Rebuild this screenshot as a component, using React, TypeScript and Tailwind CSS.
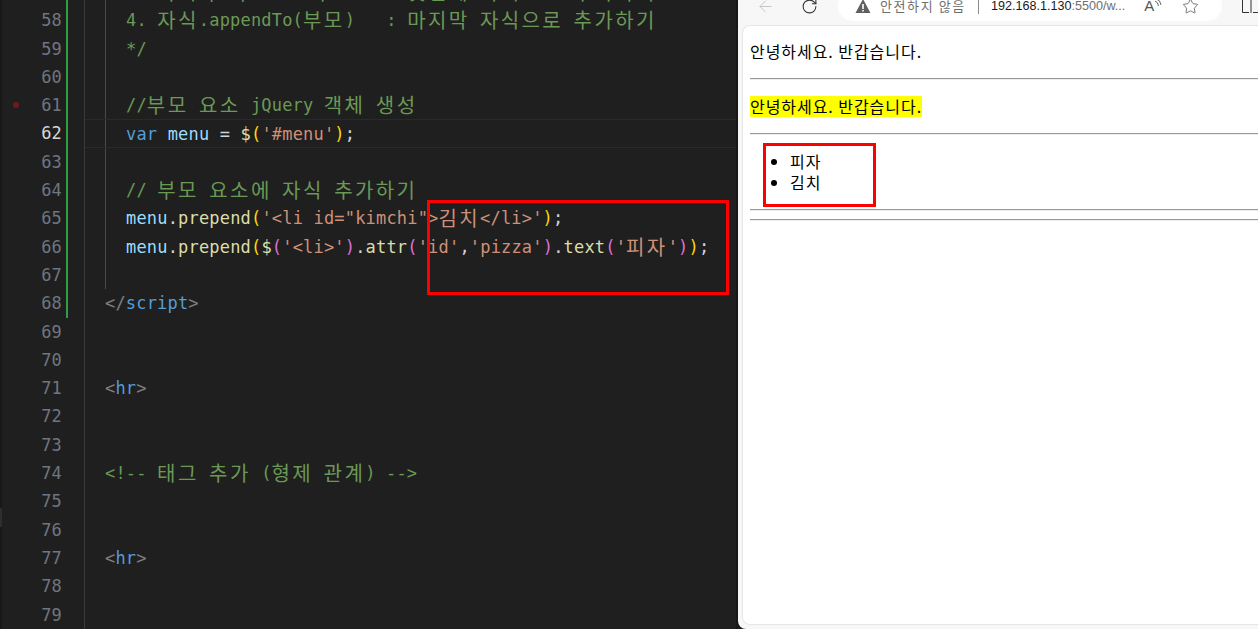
import { ArrowLeft, RotateCw, Star } from "lucide-react";

type Token = [string, string];

interface Row {
  n: number;
  code?: Token[];
  indent?: boolean;
}

const comment = "text-[#6a9955]";
const str = "text-[#ce9178]";
const plain = "text-[#d4d4d4]";
const variable = "text-[#9cdcfe]";
const fn = "text-[#dcdcaa]";
const gold = "text-[#ffd700]";
const purple = "text-[#da70d6]";
const keyword = "text-[#569cd6]";
const bracket = "text-[#808080]";

const rows: Row[] = [
  { n: 57, indent: true, code: [["3. 자식.prependTo(부모)  : 첫번째 자식으로 추가하기", comment]] },
  { n: 58, indent: true, code: [["4. 자식.appendTo(부모)   : 마지막 자식으로 추가하기", comment]] },
  { n: 59, indent: true, code: [["*/", comment]] },
  { n: 60, indent: true },
  { n: 61, indent: true, code: [["//부모 요소 jQuery 객체 생성", comment]] },
  {
    n: 62,
    indent: true,
    code: [
      ["var ", keyword],
      ["menu", variable],
      [" = ", plain],
      ["$", fn],
      ["(", gold],
      ["'#menu'", str],
      [")", gold],
      [";", plain],
    ],
  },
  { n: 63, indent: true },
  { n: 64, indent: true, code: [["// 부모 요소에 자식 추가하기", comment]] },
  {
    n: 65,
    indent: true,
    code: [
      ["menu", variable],
      [".", plain],
      ["prepend", fn],
      ["(", gold],
      ["'<li id=\"kimchi\">김치</li>'", str],
      [")", gold],
      [";", plain],
    ],
  },
  {
    n: 66,
    indent: true,
    code: [
      ["menu", variable],
      [".", plain],
      ["prepend", fn],
      ["(", gold],
      ["$", fn],
      ["(", purple],
      ["'<li>'", str],
      [")", purple],
      [".", plain],
      ["attr", fn],
      ["(", purple],
      ["'id'", str],
      [",", plain],
      ["'pizza'", str],
      [")", purple],
      [".", plain],
      ["text", fn],
      ["(", purple],
      ["'피자'", str],
      [")", purple],
      [")", gold],
      [";", plain],
    ],
  },
  { n: 67, indent: true },
  {
    n: 68,
    code: [
      ["</", bracket],
      ["script", keyword],
      [">", bracket],
    ],
  },
  { n: 69 },
  { n: 70 },
  {
    n: 71,
    code: [
      ["<", bracket],
      ["hr", keyword],
      [">", bracket],
    ],
  },
  { n: 72 },
  { n: 73 },
  { n: 74, code: [["<!-- 태그 추가 (형제 관계) -->", comment]] },
  { n: 75 },
  { n: 76 },
  {
    n: 77,
    code: [
      ["<", bracket],
      ["hr", keyword],
      [">", bracket],
    ],
  },
  { n: 78 },
  { n: 79 },
];

// hangul takes two cells in the editor font, so runs get their own spacing
const CodeText = ({ text }: { text: string }) => (
  <>
    {text.split(/([가-힣]+)/).map((part, i) =>
      /[가-힣]/.test(part) ? (
        <span key={i} className="align-[-2px] text-[20px] leading-none tracking-[2.4px]">
          {part}
        </span>
      ) : (
        <span key={i}>{part}</span>
      ),
    )}
  </>
);

const EditorRow = ({ row }: { row: Row }) => {
  const active = row.n === 62;
  return (
    <div className="flex h-[28.3px] items-stretch">
      <div className="relative w-[60px] shrink-0">
        {row.n === 61 && (
          <span className="absolute left-[11px] top-[11px] h-[6px] w-[6px] rounded-full bg-[#6e1a17]" />
        )}
        <div
          className={`text-right leading-[28.3px] ${active ? "text-[#d8d8d8]" : "text-[#6e7681]"}`}
        >
          {row.n}
        </div>
      </div>
      <div className="ml-[4px] w-[2px] shrink-0">
        {row.n <= 68 && <div className="h-full w-full bg-[#2ea043]" />}
      </div>
      <div className="w-[17px] shrink-0 border-r border-[#3a3a3a]" />
      <div className={`min-w-0 flex-1 ${active ? "border-y border-[#2a2a2a]" : ""}`}>
        <div
          className={`ml-[20px] h-full whitespace-pre leading-[28.3px] ${
            row.indent ? "border-l border-[#4a4a4a] pl-[20px]" : ""
          }`}
        >
          {row.code?.map(([text, color], i) => (
            <span key={i} className={color}>
              <CodeText text={text} />
            </span>
          ))}
        </div>
      </div>
    </div>
  );
};

const Rule = () => <div className="h-[2px] border-t border-[#999999] bg-[#eeeeee]" />;

export default function App() {
  return (
    <div className="relative flex h-[629px] w-[1258px] overflow-hidden bg-[#1a1a1a]">
      <div className="h-full w-[738px] shrink-0 overflow-hidden border-x-2 border-l-[#181818] border-r-[#181818] bg-[#1f1f1f] font-['DejaVu_Sans_Mono','Noto_Sans_CJK_KR',monospace] text-[17px] tracking-[0.18px]">
        <div className="-mt-[22px]">
          {rows.map((row) => (
            <EditorRow key={row.n} row={row} />
          ))}
        </div>
      </div>

      <div className="flex min-w-0 flex-1 flex-col overflow-hidden rounded-bl-[8px] bg-[#f7f7f7] font-['Noto_Sans_CJK_KR','Liberation_Sans',sans-serif]">
        <div className="h-[25px] shrink-0 overflow-hidden">
          <div className="-mt-[9px] flex h-[30px] items-center">
            <ArrowLeft className="ml-[18px] h-[19px] w-[19px] shrink-0 text-[#c4c4c4]" strokeWidth={1.25} />
            <RotateCw className="ml-[26px] h-[17px] w-[17px] shrink-0 text-[#333333]" strokeWidth={1.5} />
            <div className="ml-[20px] flex h-[30px] w-[384px] shrink-0 items-center rounded-full bg-white">
              <svg viewBox="0 0 16 16" className="ml-[17px] h-[16px] w-[16px] shrink-0 fill-[#5f5f5f]">
                <path d="M8 1 L15.5 15 H.5 Z M7.2 6 V11 H8.8 V6 Z M7.2 12 V13.5 H8.8 V12 Z" fillRule="evenodd" />
              </svg>
              <span className="ml-[9px] text-[13px] tracking-[1.6px] text-[#6e6e6e]">안전하지 않음</span>
              <span className="ml-[12px] h-[16px] w-px bg-[#8a8a8a]" />
              <span className="ml-[12px] font-['Liberation_Sans',sans-serif] text-[12.6px] text-[#1a1a1a]">
                192.168.1.130<span className="text-[#6e6e6e]">:5500/w...</span>
              </span>
              <span className="ml-[19px] font-['Liberation_Sans',sans-serif] text-[15px] text-[#555555]">A</span>
              <svg viewBox="0 0 8 10" className="mb-[6px] h-[10px] w-[8px] shrink-0 fill-none stroke-[#666666]">
                <path d="M1 3 Q4 4 4.5 8 M2 .8 Q6.5 2 7 7" />
              </svg>
              <Star className="ml-[20px] h-[17px] w-[17px] shrink-0 text-[#666666]" strokeWidth={1.25} />
            </div>
            <svg viewBox="0 0 20 20" className="ml-[19px] h-[20px] w-[20px] shrink-0 fill-none stroke-[#333333]">
              <path d="M8 3.5 H1.5 V16.5 H8 M12 3.5 H18.5 V16.5 H12 M10 3 V17" />
            </svg>
          </div>
        </div>

        <div className="ml-[4px] mb-[4px] flex-1 rounded-l-[8px] border-l border-t border-b border-[#e6e6e6] bg-white pl-[7px] text-[16px] tracking-[0.95px] text-black">
          <div className="flex h-[52px] items-center pb-[2px]">
            <span>안녕하세요. 반갑습니다.</span>
          </div>
          <Rule />
          <div className="flex h-[53px] items-center">
            <span className="bg-[#ffff00] leading-[21px]">안녕하세요. 반갑습니다.</span>
          </div>
          <Rule />
          <ul className="ml-[23px] flex h-[74px] list-disc flex-col justify-center pl-[17px] leading-[21px]">
            <li>피자</li>
            <li>김치</li>
          </ul>
          <Rule />
          <div className="h-[8px]" />
          <Rule />
        </div>
      </div>

      <div className="absolute left-0 top-[508px] h-[19px] w-[2px] bg-[#2e2e2e]" />
      <div className="absolute left-[427px] top-[200px] h-[95px] w-[302px] border-[3px] border-[#ff0000]" />
      <div className="absolute left-[763px] top-[143px] h-[64px] w-[113px] border-[3px] border-[#ff0000]" />
    </div>
  );
}
